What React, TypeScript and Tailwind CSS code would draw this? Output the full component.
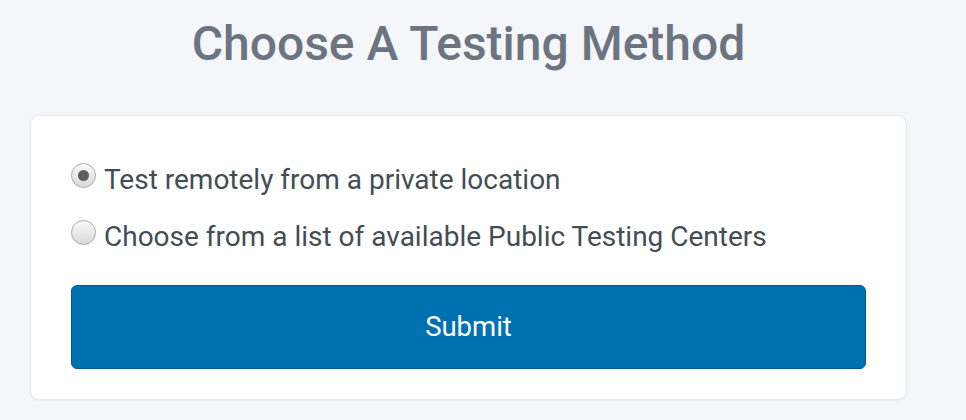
import React, { useState } from 'react';

const options = [
  { id: 'remote', label: 'Test remotely from a private location' },
  { id: 'public', label: 'Choose from a list of available Public Testing Centers' },
];

function Radio({ checked }: { checked: boolean }) {
  return (
    <span className="flex h-[25px] w-[25px] shrink-0 items-center justify-center rounded-full border border-[#a9a9a9] bg-gradient-to-b from-[#fafafa] to-[#d9d9d9] shadow-[inset_0_1px_1px_rgba(255,255,255,0.8)]">
      {checked && <span className="h-[11px] w-[11px] rounded-full bg-[#5f5f5f]" />}
    </span>
  );
}

export default function App() {
  const [method, setMethod] = useState('remote');

  return (
    <div className="min-h-screen bg-[#f5f6fa] pt-[16px] font-['Roboto',sans-serif]">
      <div className="ml-[30px] w-[877px]">
        <h1 className="text-center text-[48px] font-medium leading-[56px] text-[#6b7480]">
          Choose A Testing Method
        </h1>

        <div className="mt-[43px] rounded-[9px] border border-[#e6e7eb] bg-white px-[40px] pb-[30px] pt-[47px] shadow-[0_1px_2px_rgba(0,0,0,0.04)]">
          <div className="flex flex-col gap-[32px]">
            {options.map((opt) => (
              <label
                key={opt.id}
                className="flex h-[25px] cursor-pointer items-center gap-[8px] text-[28px] text-[#444c54]"
                onClick={() => setMethod(opt.id)}
              >
                <Radio checked={method === opt.id} />
                <span className="mt-[8px] leading-none">{opt.label}</span>
              </label>
            ))}
          </div>

          <button className="mt-[40px] flex h-[84px] w-full items-center justify-center rounded-[6px] border border-[#005b8f] bg-[#0071b0] text-[27.5px] text-white">
            Submit
          </button>
        </div>
      </div>
    </div>
  );
}
